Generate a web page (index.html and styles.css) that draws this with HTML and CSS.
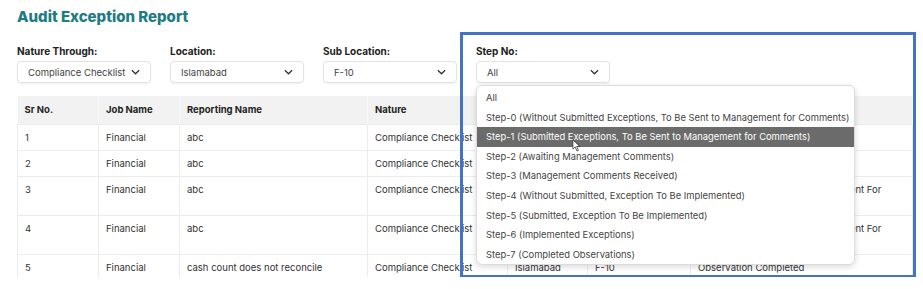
FILE: index.html
```html
<!DOCTYPE html>
<html lang="en">
<head>
    <meta charset="UTF-8">
    <meta name="viewport" content="width=device-width, initial-scale=1.0">
    <title>Audit Exception Report</title>
    <link rel="stylesheet" href="styles.css">
</head>
<body>
    <div class="page">
        <h1 class="title">Audit Exception Report</h1>

        <div class="filters">
            <div class="filter">
                <label>Nature Through:</label>
                <div class="select">
                    <span>Compliance Checklist</span>
                    <svg class="chevron" viewBox="0 0 10 6"><polyline points="1,1 5,5 9,1"/></svg>
                </div>
            </div>
            <div class="filter">
                <label>Location:</label>
                <div class="select">
                    <span>Islamabad</span>
                    <svg class="chevron" viewBox="0 0 10 6"><polyline points="1,1 5,5 9,1"/></svg>
                </div>
            </div>
            <div class="filter">
                <label>Sub Location:</label>
                <div class="select">
                    <span>F-10</span>
                    <svg class="chevron" viewBox="0 0 10 6"><polyline points="1,1 5,5 9,1"/></svg>
                </div>
            </div>
            <div class="filter">
                <label>Step No:</label>
                <div class="select">
                    <span>All</span>
                    <svg class="chevron" viewBox="0 0 10 6"><polyline points="1,1 5,5 9,1"/></svg>
                </div>

                <ul class="dropdown">
                    <li>All</li>
                    <li>Step-0 (Without Submitted Exceptions, To Be Sent to Management for Comments)</li>
                    <li class="active">Step-1 (Submitted Exceptions, To Be Sent to Management for Comments)</li>
                    <li>Step-2 (Awaiting Management Comments)</li>
                    <li>Step-3 (Management Comments Received)</li>
                    <li>Step-4 (Without Submitted, Exception To Be Implemented)</li>
                    <li>Step-5 (Submitted, Exception To Be Implemented)</li>
                    <li>Step-6 (Implemented Exceptions)</li>
                    <li>Step-7 (Completed Observations)</li>
                </ul>
                <svg class="cursor" viewBox="0 0 12 18"><path d="M1 1 L1 14 L4.2 11 L6.6 16.5 L8.6 15.6 L6.3 10.3 L10.6 10.3 Z"/></svg>
            </div>
        </div>

        <table class="report">
            <colgroup>
                <col style="width: 81px">
                <col style="width: 81px">
                <col style="width: 188px">
                <col style="width: 140px">
                <col style="width: 80px">
                <col style="width: 103px">
                <col>
            </colgroup>
            <thead>
                <tr>
                    <th>Sr No.</th>
                    <th>Job Name</th>
                    <th>Reporting Name</th>
                    <th>Nature</th>
                    <th>Location</th>
                    <th>Sub Location</th>
                    <th>Status</th>
                </tr>
            </thead>
            <tbody>
                <tr>
                    <td>1</td><td>Financial</td><td>abc</td><td>Compliance Checklist</td>
                    <td>Islamabad</td><td>F-10</td><td>Awaiting Comments</td>
                </tr>
                <tr>
                    <td>2</td><td>Financial</td><td>abc</td><td>Compliance Checklist</td>
                    <td>Islamabad</td><td>F-10</td><td>Awaiting Comments</td>
                </tr>
                <tr>
                    <td>3</td><td>Financial</td><td>abc</td><td>Compliance Checklist</td>
                    <td>Islamabad</td><td>F-10</td><td>Audit Exception Sent to Management For Comments</td>
                </tr>
                <tr>
                    <td>4</td><td>Financial</td><td>abc</td><td>Compliance Checklist</td>
                    <td>Islamabad</td><td>F-10</td><td>Audit Exception Sent to Management For Comments</td>
                </tr>
                <tr>
                    <td>5</td><td>Financial</td><td>cash count does not reconcile</td><td>Compliance Checklist</td>
                    <td>Islamabad</td><td>F-10</td><td>Observation Completed</td>
                </tr>
            </tbody>
        </table>

        <div class="highlight-frame"></div>
    </div>
</body>
</html>
```

FILE: styles.css
```css
body {
    margin: 0;
    background: #fff;
    font-family: Inter, "Open Sans", sans-serif;
    color: #333;
}
.page {
    position: relative;
    height: 277px;
    overflow: hidden;
    padding: 0 10px 0 17px;
}
.title {
    margin: 0;
    padding-top: 7px;
    font-size: 15px;
    line-height: 20px;
    font-weight: 800;
    color: #217b82;
}
.filters {
    display: flex;
    gap: 19px;
    margin-top: 18px;
}
.filter {
    position: relative;
    width: 134px;
}
.filter label {
    display: block;
    font-size: 10px;
    line-height: 12px;
    font-weight: 700;
    color: #222;
    margin-bottom: 4px;
}
.select {
    display: flex;
    align-items: center;
    justify-content: space-between;
    height: 20px;
    padding: 0 10px;
    border: 1px solid #e2e2e2;
    border-radius: 4px;
    box-shadow: 0 1px 2px rgba(0, 0, 0, 0.06);
    font-size: 9.5px;
    color: #444;
}
.chevron {
    width: 9px;
    height: 6px;
    fill: none;
    stroke: #333;
    stroke-width: 1.4;
}
.dropdown {
    position: absolute;
    top: 40px;
    left: 0;
    z-index: 2;
    width: 377px;
    margin: 0;
    padding: 2px 0 0;
    list-style: none;
    background: #fff;
    border: 1px solid #dcdcdc;
    border-radius: 6px;
    box-shadow: 0 2px 6px rgba(0, 0, 0, 0.15);
    overflow: hidden;
}
.dropdown li {
    height: 19.6px;
    line-height: 19.6px;
    padding-left: 9px;
    font-size: 9.4px;
    color: #444;
    white-space: nowrap;
}
.dropdown li.active {
    background: #6b6b6b;
    color: #fff;
}
.cursor {
    position: absolute;
    top: 94px;
    left: 96px;
    z-index: 3;
    width: 9px;
    height: 13px;
    fill: #fff;
    stroke: #222;
    stroke-width: 1;
}
.report {
    margin-top: 13px;
    width: 896px;
    border-collapse: collapse;
    table-layout: fixed;
    font-size: 9.5px;
    color: #333;
}
.report th {
    background: #f2f2f2;
    text-align: left;
    font-weight: 700;
    color: #222;
    padding: 7px;
    line-height: 14px;
    border-right: 1px solid #f8f8f8;
}
.report td {
    padding: 6px 7px;
    line-height: 13px;
    vertical-align: top;
    border: 1px solid #ececec;
}
.highlight-frame {
    position: absolute;
    left: 460px;
    top: 32px;
    width: 450px;
    height: 240px;
    border: 3px solid #4472c4;
    pointer-events: none;
}
```
